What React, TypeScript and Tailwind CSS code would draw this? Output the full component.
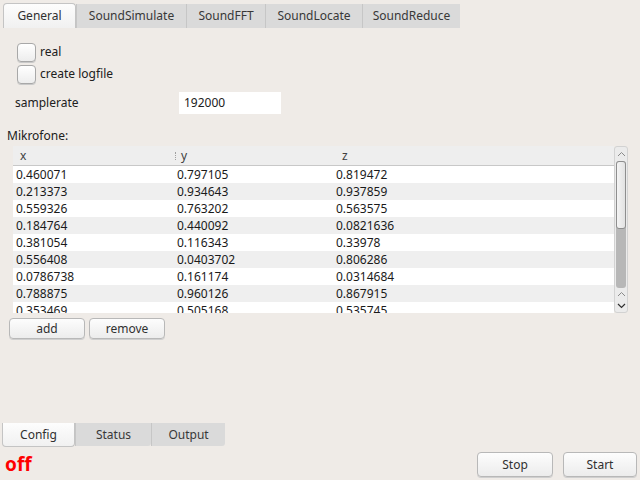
import React from 'react';

const rows: [string, string, string][] = [
  ['0.460071', '0.797105', '0.819472'],
  ['0.213373', '0.934643', '0.937859'],
  ['0.559326', '0.763202', '0.563575'],
  ['0.184764', '0.440092', '0.0821636'],
  ['0.381054', '0.116343', '0.33978'],
  ['0.556408', '0.0403702', '0.806286'],
  ['0.0786738', '0.161174', '0.0314684'],
  ['0.788875', '0.960126', '0.867915'],
  ['0.353469', '0.505168', '0.535745'],
];

const topTabs = [
  { label: 'General', w: 'w-[73px]' },
  { label: 'SoundSimulate', w: 'w-[110px]' },
  { label: 'SoundFFT', w: 'w-[79px]' },
  { label: 'SoundLocate', w: 'w-[97px]' },
  { label: 'SoundReduce', w: 'w-[98px]' },
];

const bottomTabs = [
  { label: 'Config', w: 'w-[73px]' },
  { label: 'Status', w: 'w-[76px]' },
  { label: 'Output', w: 'w-[74px]' },
];

function Tab({ label, w, active }: { label: string; w: string; active: boolean }) {
  return active ? (
    <div
      className={`${w} h-full flex items-center justify-center bg-gradient-to-b from-[#fdfdfd] to-[#f1f1f1] border border-[#c4c4c4] border-b-0 rounded-t-[4px] text-[#303030]`}
    >
      {label}
    </div>
  ) : (
    <div
      className={`${w} h-[24px] mt-auto flex items-center justify-center bg-[#dadada] border-l border-[#c6c6c6] text-[#383838]`}
    >
      {label}
    </div>
  );
}

function Checkbox({ label }: { label: string }) {
  return (
    <div className="flex items-center h-[22px]">
      <div className="w-[19px] h-[19px] rounded-[4px] border border-[#a8a8a8] bg-gradient-to-b from-white to-[#ededed] shadow-[0_1px_0_#c9c9c9]" />
      <span className="ml-[4px] text-[#202020]">{label}</span>
    </div>
  );
}

function Button({ label, w }: { label: string; w: string }) {
  return (
    <div
      className={`${w} flex items-center justify-center rounded-[4px] border border-[#b8b8b8] bg-gradient-to-b from-[#fdfdfd] to-[#ececec] text-[#303030] shadow-[0_1px_0_#cfcfcf]`}
    >
      {label}
    </div>
  );
}

export default function App() {
  return (
    <div className="w-[640px] h-[480px] bg-[#efebe7] flex flex-col text-[12px] font-['Noto_Sans',sans-serif] overflow-hidden">
      <div className="flex h-[25px] mt-[3px] ml-[3px]">
        {topTabs.map((t, i) => (
          <Tab key={t.label} label={t.label} w={t.w} active={i === 0} />
        ))}
      </div>

      <div className="flex flex-col pl-[17px] mt-[13px]">
        <Checkbox label="real" />
        <Checkbox label="create logfile" />
      </div>

      <div className="flex items-center h-[22px] mt-[7px] pl-[15px]">
        <span className="w-[164px] text-[#202020]">samplerate</span>
        <div className="w-[102px] h-full bg-white flex items-center pl-[5px] text-[#202020]">192000</div>
      </div>

      <div className="mt-[13px] ml-[7px] h-[18px] flex items-center text-[#202020]">Mikrofone:</div>

      <div className="ml-[13px] mt-[1px] w-[615px] h-[167px] flex">
        <div className="flex-1 flex flex-col bg-white overflow-hidden">
          <div className="h-[20px] shrink-0 flex items-center bg-[#eeeeee] border-b border-[#c8c8c8] text-[#404040]">
            <span className="w-[162px] pl-[7px]">x</span>
            <span className="w-[161px] flex items-center">
              <span className="h-[8px] border-l border-dotted border-[#a0a0a0]" />
              <span className="ml-[5px]">y</span>
            </span>
            <span className="pl-[6px]">z</span>
          </div>
          {rows.map((r, i) => (
            <div
              key={i}
              className={`h-[17px] shrink-0 flex items-center text-[#1a1a1a] ${i % 2 === 1 ? 'bg-[#efefef]' : 'bg-white'}`}
            >
              <span className="w-[164px] pl-[3px]">{r[0]}</span>
              <span className="w-[159px]">{r[1]}</span>
              <span>{r[2]}</span>
            </div>
          ))}
        </div>
        <div className="w-[14px] flex flex-col bg-[#ebebeb] border border-[#d2d2d2] rounded-[3px]">
          <div className="h-[14px] flex items-center justify-center">
            <svg width="9" height="6" viewBox="0 0 9 6">
              <path d="M1 5 L4.5 1.5 L8 5" fill="none" stroke="#8a8a8a" strokeWidth="1" />
            </svg>
          </div>
          <div className="flex-1 mx-[1px] bg-[#b7b7b7] rounded-[3px] flex flex-col">
            <div className="h-[68px] rounded-[3px] border border-[#8e8e8e] bg-gradient-to-r from-[#f4f4f4] to-[#e2e2e2]" />
          </div>
          <div className="h-[12px] flex items-center justify-center">
            <svg width="9" height="6" viewBox="0 0 9 6">
              <path d="M1 5 L4.5 1.5 L8 5" fill="none" stroke="#8a8a8a" strokeWidth="1" />
            </svg>
          </div>
          <div className="h-[12px] flex items-center justify-center">
            <svg width="9" height="6" viewBox="0 0 9 6">
              <path d="M1 1 L4.5 4.5 L8 1" fill="none" stroke="#303030" strokeWidth="1.2" />
            </svg>
          </div>
        </div>
      </div>

      <div className="flex gap-[4px] ml-[9px] mt-[5px] h-[21px]">
        <Button label="add" w="w-[76px]" />
        <Button label="remove" w="w-[76px]" />
      </div>

      <div className="flex-1" />

      <div className="flex h-[24px] ml-[2px]">
        {bottomTabs.map((t, i) => (
          <div
            key={t.label}
            className={`${t.w} flex items-center justify-center ${
              i === 0
                ? 'bg-gradient-to-b from-[#fdfdfd] to-[#f1f1f1] border border-[#c4c4c4] border-t-0 rounded-b-[4px] text-[#303030]'
                : 'h-[23px] bg-[#dadada] border-l border-[#c6c6c6] text-[#383838] rounded-br-[3px]'
            }`}
          >
            {t.label}
          </div>
        ))}
      </div>

      <div className="flex items-center h-[25px] mt-[5px] mb-[3px]">
        <span className="ml-[5px] text-[#ff0000] font-bold text-[19px] leading-none">off</span>
        <div className="flex-1" />
        <div className="flex gap-[10px] mr-[3px] h-full">
          <Button label="Stop" w="w-[76px]" />
          <Button label="Start" w="w-[74px]" />
        </div>
      </div>
    </div>
  );
}
